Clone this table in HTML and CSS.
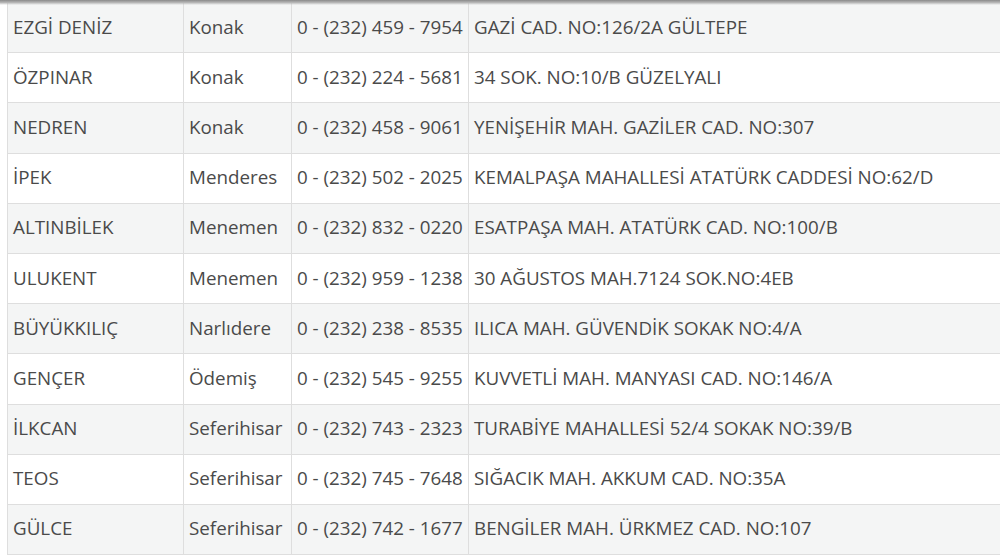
FILE: index.html
```html
<!DOCTYPE html>
<html lang="tr">
<head>
<meta charset="utf-8">
<link rel="stylesheet" href="styles.css">
</head>
<body>
<div class="topshade"></div>
<div class="wrap">
<table class="list">
<colgroup><col class="c1"><col class="c2"><col class="c3"><col class="c4"></colgroup>
<tbody>
<tr><td>EZGİ DENİZ</td><td>Konak</td><td>0 - (232) 459 - 7954</td><td>GAZİ CAD. NO:126/2A GÜLTEPE</td></tr>
<tr><td>ÖZPINAR</td><td>Konak</td><td>0 - (232) 224 - 5681</td><td>34 SOK. NO:10/B GÜZELYALI</td></tr>
<tr><td>NEDREN</td><td>Konak</td><td>0 - (232) 458 - 9061</td><td>YENİŞEHİR MAH. GAZİLER CAD. NO:307</td></tr>
<tr><td>İPEK</td><td>Menderes</td><td>0 - (232) 502 - 2025</td><td>KEMALPAŞA MAHALLESİ ATATÜRK CADDESİ NO:62/D</td></tr>
<tr><td>ALTINBİLEK</td><td>Menemen</td><td>0 - (232) 832 - 0220</td><td>ESATPAŞA MAH. ATATÜRK CAD. NO:100/B</td></tr>
<tr><td>ULUKENT</td><td>Menemen</td><td>0 - (232) 959 - 1238</td><td>30 AĞUSTOS MAH.7124 SOK.NO:4EB</td></tr>
<tr><td>BÜYÜKKILIÇ</td><td>Narlıdere</td><td>0 - (232) 238 - 8535</td><td>ILICA MAH. GÜVENDİK SOKAK NO:4/A</td></tr>
<tr><td>GENÇER</td><td>Ödemiş</td><td>0 - (232) 545 - 9255</td><td>KUVVETLİ MAH. MANYASI CAD. NO:146/A</td></tr>
<tr><td>İLKCAN</td><td>Seferihisar</td><td>0 - (232) 743 - 2323</td><td>TURABİYE MAHALLESİ 52/4 SOKAK NO:39/B</td></tr>
<tr><td>TEOS</td><td>Seferihisar</td><td>0 - (232) 745 - 7648</td><td>SIĞACIK MAH. AKKUM CAD. NO:35A</td></tr>
<tr><td>GÜLCE</td><td>Seferihisar</td><td>0 - (232) 742 - 1677</td><td>BENGİLER MAH. ÜRKMEZ CAD. NO:107</td></tr>
</tbody>
</table>
</div>
</body>
</html>
```

FILE: styles.css
```css
html, body {
  margin: 0;
  padding: 0;
  background: #fff;
  overflow: hidden;
}
body {
  font-family: "Open Sans", "Liberation Sans", sans-serif;
  color: #4a4a4a;
}
.topshade {
  position: absolute;
  left: 0;
  top: 0;
  width: 100%;
  height: 5px;
  background: linear-gradient(#8a8a8a, #b5b5b5 50%, rgba(220,220,220,0));
  z-index: 2;
}
.wrap {
  margin-left: 7px;
  padding-top: 2px;
  width: 993px;
  overflow: hidden;
}
.list {
  border-collapse: collapse;
  width: 1060px;
  table-layout: fixed;
  font-size: 18.8px;
}
.c1 { width: 176px; }
.c2 { width: 108px; }
.c3 { width: 177px; }
.list td {
  border: 1px solid #dedede;
  height: 50.2px;
  padding: 0 5px 2px;
  box-sizing: border-box;
  vertical-align: middle;
  white-space: nowrap;
  overflow: hidden;
}
.list tr:nth-child(odd) td {
  background: #f4f5f5;
}
```
